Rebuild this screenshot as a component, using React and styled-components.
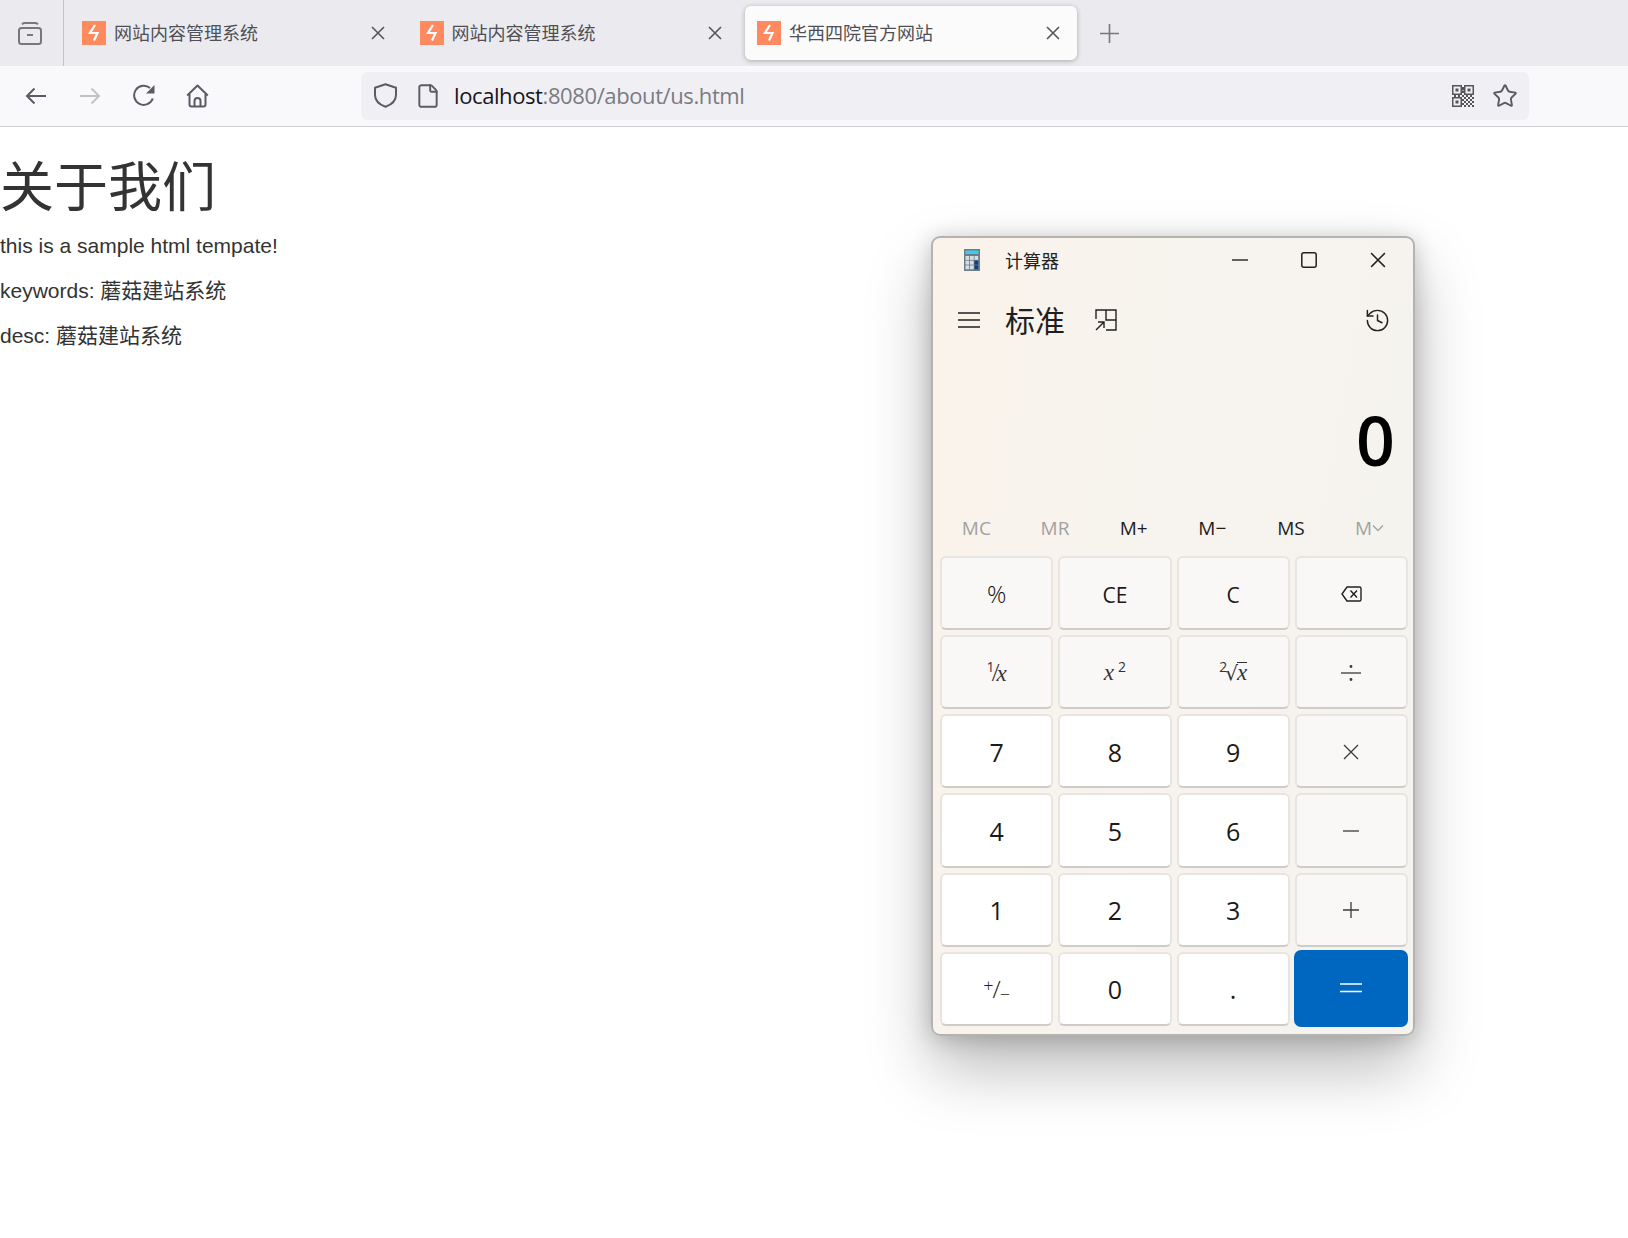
import React from "react";
import styled, { createGlobalStyle } from "styled-components";
import { History, Star, File } from "lucide-react";

const Global = createGlobalStyle`
  html, body { margin: 0; padding: 0; background: #fff; }
  * { box-sizing: border-box; }
`;
const UI = `"Open Sans", "Noto Sans CJK SC", sans-serif`;
const WEB = `"Liberation Sans", "Noto Sans CJK SC", sans-serif`;
const CJK = `"Noto Sans CJK SC", sans-serif`;

const Page = styled.div`position: relative; width: 1628px; height: 1238px; overflow: hidden; background: #fff;`;
const TabStrip = styled.div`display: flex; align-items: center; height: 66px; background: #ebebef;`;
const SideButton = styled.div`
  display: flex; align-items: center; justify-content: center;
  width: 64px; height: 66px; border-right: 1px solid #c4c4c8; margin-right: 6px; padding-right: 4px;
`;
const Tab = styled.div`
  display: flex; align-items: center; width: 331.5px; height: 54px; margin-right: 6px; padding: 0 17px 0 12px;
  border-radius: 6px;
  background: ${p => (p.$active ? "#fbfbfc" : "transparent")};
  box-shadow: ${p => (p.$active ? "0 1px 5px rgba(0,0,0,.28)" : "none")};
`;
const TabTitle = styled.span`flex: 1; margin: 0 0 2px 8px; font: 18px/24px ${CJK}; color: #4f4f55; white-space: nowrap;`;
const NewTab = styled.div`display: flex; margin-left: 17px;`;
const Toolbar = styled.div`
  display: flex; align-items: center; height: 61px; padding: 0 0 1px 9px;
  background: #f9f9fb; border-bottom: 1px solid #cfcfd4;
`;
const NavButton = styled.div`display: flex; align-items: center; justify-content: center; width: 54px; height: 48px;`;
const HomeButton = styled(NavButton)`padding-right: 2px;`;
const NavRow = styled.div`display: flex; width: 352px;`;
const Address = styled.div`
  display: flex; align-items: center; width: 1168px; height: 48px; padding: 0 11px 0 13px;
  background: #f0f0f4; border-radius: 6px;
`;
const Url = styled.div`flex: 1; margin: 0 0 1px 13px; font: 22px/30px ${UI}; letter-spacing: -0.4px; color: #7b7b82; white-space: nowrap;`;
const Host = styled.span`color: #15141a;`;
const QrWrap = styled.div`display: flex; margin-right: 18px;`;
const StarWrap = styled.div`display: flex;`;
const FileWrap = styled.div`display: flex; margin-left: 18px;`;

const Content = styled.main`padding-top: 29px; color: #333; font-family: ${WEB};`;
const Heading = styled.h1`margin: 0 0 14px; font-size: 54px; line-height: 64px; font-weight: 400;`;
const Para = styled.p`margin: 0 0 21px; font-size: 21px; line-height: 24px;`;

const Calc = styled.section`
  position: absolute; left: 931px; top: 236px; width: 484px; height: 800px;
  display: flex; flex-direction: column;
  border: 2px solid #b4b3b1; border-radius: 9px;
  background: linear-gradient(100deg, #faf3ec 0%, #f7f3ee 45%, #f5f3ef 100%);
  box-shadow: 0 32px 64px rgba(0,0,0,.27), 0 3px 22px rgba(0,0,0,.2);
  font-family: ${UI}; color: #1a1a1a;
`;
const TitleBar = styled.div`display: flex; align-items: center; height: 44px; padding: 0 1px 0 31px;`;
const TitleText = styled.span`flex: 1; margin-left: 25px; font: 18px/24px ${CJK}; color: #222;`;
const Caption = styled.div`display: flex; align-items: center; justify-content: center; width: 69px; height: 44px;`;
const Header = styled.div`display: flex; align-items: center; height: 76px; padding: 0 22px 0 25px;`;
const Mode = styled.span`margin: 0 30px 2px 25px; font: 30px/40px ${CJK}; color: #1f1f1f;`;
const HeaderSpacer = styled.div`flex: 1;`;
const Display = styled.div`
  display: flex; align-items: center; justify-content: flex-end; height: 152px; padding: 11px 18px 0 0;
  font-size: 68px; line-height: 80px; font-weight: 600; color: #000;
`;
const MemoryRow = styled.div`display: grid; grid-template-columns: repeat(6, 1fr); height: 36px; padding: 0 4px 0 4px; margin-bottom: 10px;`;
const MemoryKey = styled.div`
  display: flex; align-items: center; justify-content: center;
  font-size: 19px; color: ${p => (p.$off ? "#a3a1a0" : "#1c1c1c")};
`;
const Keypad = styled.div`
  display: grid; grid-template-columns: repeat(4, 1fr); grid-template-rows: repeat(6, 1fr);
  gap: 5px; height: 470px; padding: 0 5px 0 7px;
`;
const Key = styled.div`
  display: flex; align-items: center; justify-content: center; padding-top: 1px;
  border: 2px solid #e8e4df; border-bottom-color: #cfcbc6; border-radius: 6px;
  background: ${p => (p.$num ? "#ffffff" : "#faf8f6")};
  font-size: ${p => (p.$num ? "25px" : "21px")}; line-height: 30px; color: #1a1a1a;
`;
const PercentKey = styled(Key)`padding-top: 2px; font-size: 24px; font-weight: 300; color: #111;`;
const TextKey = styled(Key)`padding-top: 3px;`;
const EqualKey = styled.div`
  display: flex; align-items: center; justify-content: center;
  margin: -2px 0 -1px -1px; border-radius: 7px; background: #0067c0;
`;
const MathText = styled.span`
  display: inline-flex; align-items: baseline; font: italic 23px/28px "Liberation Serif", serif; color: #333;
`;
const Sup = styled.span`
  font: 400 14px/14px ${UI}; align-self: flex-start; margin-top: ${p => p.$top || 1}px;
  margin-left: ${p => p.$ml || 0}px; margin-right: ${p => p.$mr || 0}px; color: #333;
`;
const Slash = styled.span`font: 300 24px/28px ${UI}; margin: 0 -3px; color: #333;`;
const Root = styled.span`font: 400 20px/28px "DejaVu Sans", sans-serif; color: #333; margin-left: -1px;`;
const Over = styled.span`border-top: 1px solid #333; line-height: 20px; margin-left: -1px;`;
const Sign = styled.span`display: inline-flex; align-items: center; font: 300 24px/28px ${UI}; color: #222;`;
const SignTop = styled.span`font-size: 18px; line-height: 18px; margin: 0 -1px 9px 0;`;
const SignBottom = styled.span`font-size: 18px; line-height: 18px; margin: 10px 0 0 -1px;`;

const Favicon = () => (
  <svg width="24" height="24" viewBox="0 0 24 24">
    <rect width="24" height="24" fill="#ff8a60" />
    <polyline points="13,4 8,12 15.5,12 12,19.5" fill="none" stroke="#fff" strokeWidth="2.2" />
  </svg>
);
const CloseX = ({ size = 14, color = "#55555a", w = 1.6 }) => (
  <svg width={size} height={size} viewBox="0 0 14 14">
    <path d="M1 1 13 13M13 1 1 13" stroke={color} strokeWidth={w} fill="none" />
  </svg>
);
const ArchiveIcon = () => (
  <svg width="24" height="23" viewBox="0 0 24 23" fill="none" stroke="#77777c" strokeWidth="2">
    <path d="M4 2.2C5 1.3 6 1 7 1h10c1 0 2 .3 3 1.2" />
    <rect x="1" y="6" width="22" height="16" rx="2.5" />
    <path d="M9 13h6" />
  </svg>
);
const Arrow = ({ flip, color }) => (
  <svg width="22" height="18" viewBox="0 0 22 18" fill="none" stroke={color} strokeWidth="2" style={flip ? { transform: "scaleX(-1)" } : undefined}>
    <path d="M21 9H2M9.5 1.500 2 9l7.500 7.500" />
  </svg>
);
const Reload = () => (
  <svg width="23" height="23" viewBox="0 0 23 23" fill="none" stroke="#5b5b66" strokeWidth="2">
    <path d="M19.8 14.500A9.600 9.600 0 1 1 17 4" />
    <path d="M21.500 1v8.500H13z" fill="#5b5b66" stroke="none" />
  </svg>
);
const Home = () => (
  <svg width="23" height="24" viewBox="0 0 23 24" fill="none" stroke="#5b5b66" strokeWidth="2" strokeLinejoin="round">
    <path d="M1.200 11.500 11.500 1.500l10.300 10M3.500 9.800V20.500a2 2 0 0 0 2 2h12a2 2 0 0 0 2-2V9.800" />
    <path d="M8.500 22.500V17a3 3 0 0 1 6 0v5.500" />
  </svg>
);
const ShieldIcon = () => (
  <svg width="23" height="25" viewBox="0 0 23 25" fill="none" stroke="#5b5b66" strokeWidth="2" strokeLinejoin="round">
    <path d="M11.500 1.200 22 4.800V12c0 6-5.500 10-10.500 11.800C6.500 22 1 18 1 12V4.800z" />
  </svg>
);
const QrCode = () => {
  const dots = [];
  for (let y = 0; y < 11; y++) for (let x = 0; x < 11; x++) {
    const tl = x < 5 && y < 5, tr = x > 5 && y < 5, bl = x < 5 && y > 5;
    if (!tl && !tr && !bl && (x + y) % 2 === 0) dots.push(<rect key={`${x}-${y}`} x={x * 2} y={y * 2} width="2" height="2" />);
  }
  return (
    <svg width="22" height="22" viewBox="0 0 22 22" fill="#55555a">
      {dots}
      <g fill="none" stroke="#55555a" strokeWidth="1.5">
        <rect x=".75" y=".75" width="8.500" height="8.500" />
        <rect x="12.750" y=".75" width="8.500" height="8.500" />
        <rect x=".75" y="12.750" width="8.500" height="8.500" />
      </g>
      <rect x="3.500" y="3.500" width="3" height="3" />
      <rect x="15.500" y="3.500" width="3" height="3" />
      <rect x="3.500" y="15.500" width="3" height="3" />
      <rect x="9" y="4" width="4" height="1.500" />
    </svg>
  );
};
const CalcIcon = () => (
  <svg width="16" height="22" viewBox="0 0 16 22">
    <rect width="16" height="22" fill="#6e7c88" />
    <rect x="1.500" y="1.500" width="13" height="3.500" fill="#3ccbf0" />
    {[0, 1, 2].flatMap(r => [0, 1, 2].map(c => (
      <rect key={`${r}${c}`} x={1.5 + c * 4.5} y={7 + r * 4.7} width="3.7" height="3.9"
        fill={c === 2 && r > 0 ? "#0d3f86" : "#d6dde3"} />
    )))}
  </svg>
);
const Hamburger = () => (
  <svg width="22" height="16" viewBox="0 0 22 16" stroke="#222" strokeWidth="1.4">
    <path d="M0 1h22M0 8h22M0 15h22" />
  </svg>
);
const Compact = () => (
  <svg width="22" height="22" viewBox="0 0 22 22" fill="none" stroke="#222" strokeWidth="1.4">
    <path d="M1 10V1h20v20H11" />
    <path d="M11 1v10h10" />
    <path d="M1 21 9 13M3 13h6v6" />
  </svg>
);
const Op = ({ children }) => (
  <svg width="22" height="22" viewBox="0 0 22 22" fill="none" stroke="#3a3a3a" strokeWidth="1.3">{children}</svg>
);
const Backspace = () => (
  <svg width="21" height="16" viewBox="0 0 21 16" fill="none" stroke="#222" strokeWidth="1.4" strokeLinejoin="round">
    <path d="M6 1h12.500A1.500 1.500 0 0 1 20 2.500v11a1.500 1.500 0 0 1-1.500 1.500H6L1 8z" />
    <path d="M9.500 4.500l6.500 7M16 4.500l-6.500 7" />
  </svg>
);

const tabs = ["网站内容管理系统", "网站内容管理系统", "华西四院官方网站"];
const memory = [["MC", true], ["MR", true], ["M+"], ["M−"], ["MS"]];

export default function App() {
  return (
    <Page>
      <Global />
      <TabStrip>
        <SideButton><ArchiveIcon /></SideButton>
        {tabs.map((t, i) => (
          <Tab key={i} $active={i === 2}>
            <Favicon />
            <TabTitle>{t}</TabTitle>
            <CloseX />
          </Tab>
        ))}
        <NewTab>
          <svg width="19" height="19" viewBox="0 0 19 19" stroke="#77777c" strokeWidth="1.6"><path d="M0 9.500h19M9.500 0v19" /></svg>
        </NewTab>
      </TabStrip>
      <Toolbar>
        <NavRow>
          <NavButton><Arrow color="#5b5b66" /></NavButton>
          <NavButton><Arrow flip color="#c2c2c6" /></NavButton>
          <NavButton><Reload /></NavButton>
          <HomeButton><Home /></HomeButton>
        </NavRow>
        <Address>
          <ShieldIcon />
          <FileWrap><File size={26} strokeWidth={1.8} color="#5b5b66" /></FileWrap>
          <Url><Host>localhost</Host>:8080/about/us.html</Url>
          <QrWrap><QrCode /></QrWrap>
          <StarWrap><Star size={26} strokeWidth={1.8} color="#5b5b66" /></StarWrap>
        </Address>
      </Toolbar>
      <Content>
        <Heading>关于我们</Heading>
        <Para>this is a sample html tempate!</Para>
        <Para>keywords: 蘑菇建站系统</Para>
        <Para>desc: 蘑菇建站系统</Para>
      </Content>
      <Calc>
        <TitleBar>
          <CalcIcon />
          <TitleText>计算器</TitleText>
          <Caption><svg width="16" height="2" viewBox="0 0 16 2"><path d="M0 1h16" stroke="#222" strokeWidth="1.4" /></svg></Caption>
          <Caption><svg width="16" height="16" viewBox="0 0 16 16"><rect x=".8" y=".8" width="14.400" height="14.400" rx="2" fill="none" stroke="#222" strokeWidth="1.500" /></svg></Caption>
          <Caption><CloseX size={16} color="#222" w={1.3} /></Caption>
        </TitleBar>
        <Header>
          <Hamburger />
          <Mode>标准</Mode>
          <Compact />
          <HeaderSpacer />
          <History size={27} strokeWidth={1.3} color="#222" />
        </Header>
        <Display>0</Display>
        <MemoryRow>
          {memory.map(([m, off]) => <MemoryKey key={m} $off={off}>{m}</MemoryKey>)}
          <MemoryKey $off>M<svg width="12" height="8" viewBox="0 0 12 8" fill="none" stroke="#a3a1a0" strokeWidth="1.3"><path d="M1 1.500l5 5 5-5" /></svg></MemoryKey>
        </MemoryRow>
        <Keypad>
          <PercentKey>%</PercentKey>
          <TextKey>CE</TextKey>
          <TextKey>C</TextKey>
          <Key><Backspace /></Key>

          <Key><MathText><Sup $top={2}>1</Sup><Slash>/</Slash>x</MathText></Key>
          <Key><MathText>x<Sup $ml={4}>2</Sup></MathText></Key>
          <Key><MathText><Sup $mr={-1}>2</Sup><Root>√</Root><Over>x</Over></MathText></Key>
          <Key><Op><path d="M1 11h20" /><circle cx="11" cy="4.500" r=".8" fill="#3a3a3a" /><circle cx="11" cy="17.500" r=".8" fill="#3a3a3a" /></Op></Key>

          <Key $num>7</Key>
          <Key $num>8</Key>
          <Key $num>9</Key>
          <Key><Op><path d="M4 4l14 14M18 4 4 18" /></Op></Key>

          <Key $num>4</Key>
          <Key $num>5</Key>
          <Key $num>6</Key>
          <Key><Op><path d="M3 11h16" /></Op></Key>

          <Key $num>1</Key>
          <Key $num>2</Key>
          <Key $num>3</Key>
          <Key><Op><path d="M3 11h16M11 3v16" /></Op></Key>

          <Key $num><Sign><SignTop>+</SignTop>/<SignBottom>−</SignBottom></Sign></Key>
          <Key $num>0</Key>
          <Key $num>.</Key>
          <EqualKey>
            <svg width="22" height="12" viewBox="0 0 22 12" stroke="#fff" strokeWidth="1.500"><path d="M0 2h22M0 9.500h22" /></svg>
          </EqualKey>
        </Keypad>
      </Calc>
    </Page>
  );
}
